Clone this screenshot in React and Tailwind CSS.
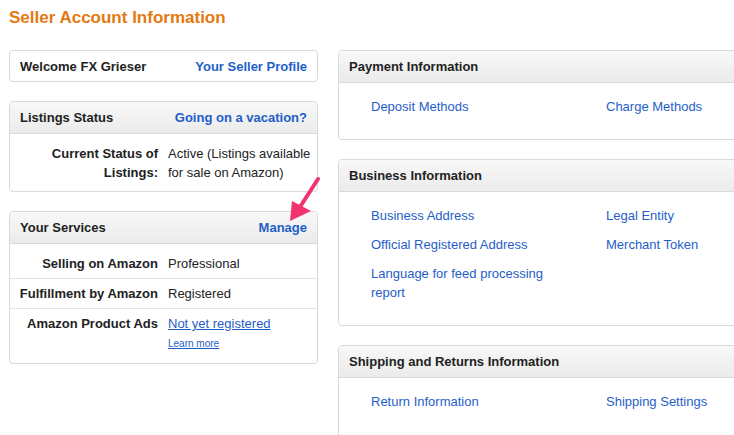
import React from "react";

const linkBlue = "text-[#1f5ec8]";

const Box = ({ title, right, children, className = "" }) => (
  <div className={`border border-[#d9d9d9] rounded-[4px] bg-white overflow-hidden ${className}`}>
    <div className="h-[32px] flex items-center justify-between px-[10px] bg-gradient-to-b from-[#f8f8f8] to-[#ebebeb] border-b border-[#dadada]">
      <span className="font-bold text-[#222]">{title}</span>
      {right && <a className={`font-bold ${linkBlue}`}>{right}</a>}
    </div>
    {children}
  </div>
);

const Row = ({ label, children, border = true, className = "" }) => (
  <div className={`flex ${border ? "border-b border-[#e5e5e5]" : ""} ${className}`}>
    <div className="w-[148px] shrink-0 text-right font-bold text-[#222]">{label}</div>
    <div className="ml-[10px] text-[#222]">{children}</div>
  </div>
);

const LinkGrid = ({ left, right, pb = "pb-[23px]" }) => (
  <div className={`grid grid-cols-[235px_1fr] pl-[32px] pt-[14px] ${pb}`}>
    <div className="flex flex-col gap-[10px]">
      {left.map((l) => (
        <a key={l} className={`${linkBlue} max-w-[190px] leading-[19px]`}>{l}</a>
      ))}
    </div>
    <div className="flex flex-col gap-[10px]">
      {right.map((l) => (
        <a key={l} className={`${linkBlue} leading-[19px]`}>{l}</a>
      ))}
    </div>
  </div>
);

export default function App() {
  return (
    <div className="relative w-[734px] h-[435px] overflow-hidden bg-white text-[13px] leading-[19px] font-['Liberation_Sans',Arial,sans-serif]">
      <h1 className="pl-[9px] pt-[8px] text-[17px] leading-[20px] font-bold text-[#e47911]">
        Seller Account Information
      </h1>

      <div className="flex gap-[20px] pl-[9px] pt-[22px]">
        {/* Left column */}
        <div className="w-[309px] shrink-0 flex flex-col gap-[19px]">
          <div className="h-[32px] border border-[#d9d9d9] rounded-[4px] flex items-center justify-between px-[10px]">
            <span className="font-bold text-[#222]">Welcome FX Grieser</span>
            <a className={`font-bold ${linkBlue}`}>Your Seller Profile</a>
          </div>

          <Box title="Listings Status" right="Going on a vacation?">
            <div className="pt-[10px] pb-[9px] pr-[4px]">
              <Row label={<>Current Status of<br />Listings:</>} border={false}>
                Active (Listings available for sale on Amazon)
              </Row>
            </div>
          </Box>

          <Box title="Your Services" right="Manage">
            <div className="pt-[5px] pb-[8px]">
              <Row label="Selling on Amazon" className="py-[5px]">Professional</Row>
              <Row label="Fulfillment by Amazon" className="py-[5px]">Registered</Row>
              <Row label="Amazon Product Ads" border={false} className="pt-[5px]">
                <a className={`${linkBlue} underline`}>Not yet registered</a>
                <div className="text-[10px] leading-[22px]">
                  <a className={`${linkBlue} underline`}>Learn more</a>
                </div>
              </Row>
            </div>
          </Box>
        </div>

        {/* Right column */}
        <div className="w-[420px] shrink-0 flex flex-col gap-[19px]">
          <Box title="Payment Information">
            <LinkGrid left={["Deposit Methods"]} right={["Charge Methods"]} />
          </Box>
          <Box title="Business Information">
            <LinkGrid
              left={["Business Address", "Official Registered Address", "Language for feed processing report"]}
              right={["Legal Entity", "Merchant Token"]}
            />
          </Box>
          <Box title="Shipping and Returns Information">
            <LinkGrid left={["Return Information"]} right={["Shipping Settings"]} pb="pb-[30px]" />
          </Box>
        </div>
      </div>

      {/* Annotation arrow */}
      <svg className="absolute left-0 top-0 pointer-events-none" width="734" height="435">
        <line x1="318" y1="179" x2="300" y2="207" stroke="#f2336e" strokeWidth="4" strokeLinecap="round" />
        <polygon points="290,221 292,201 311,211" fill="#f2336e" />
      </svg>
    </div>
  );
}
